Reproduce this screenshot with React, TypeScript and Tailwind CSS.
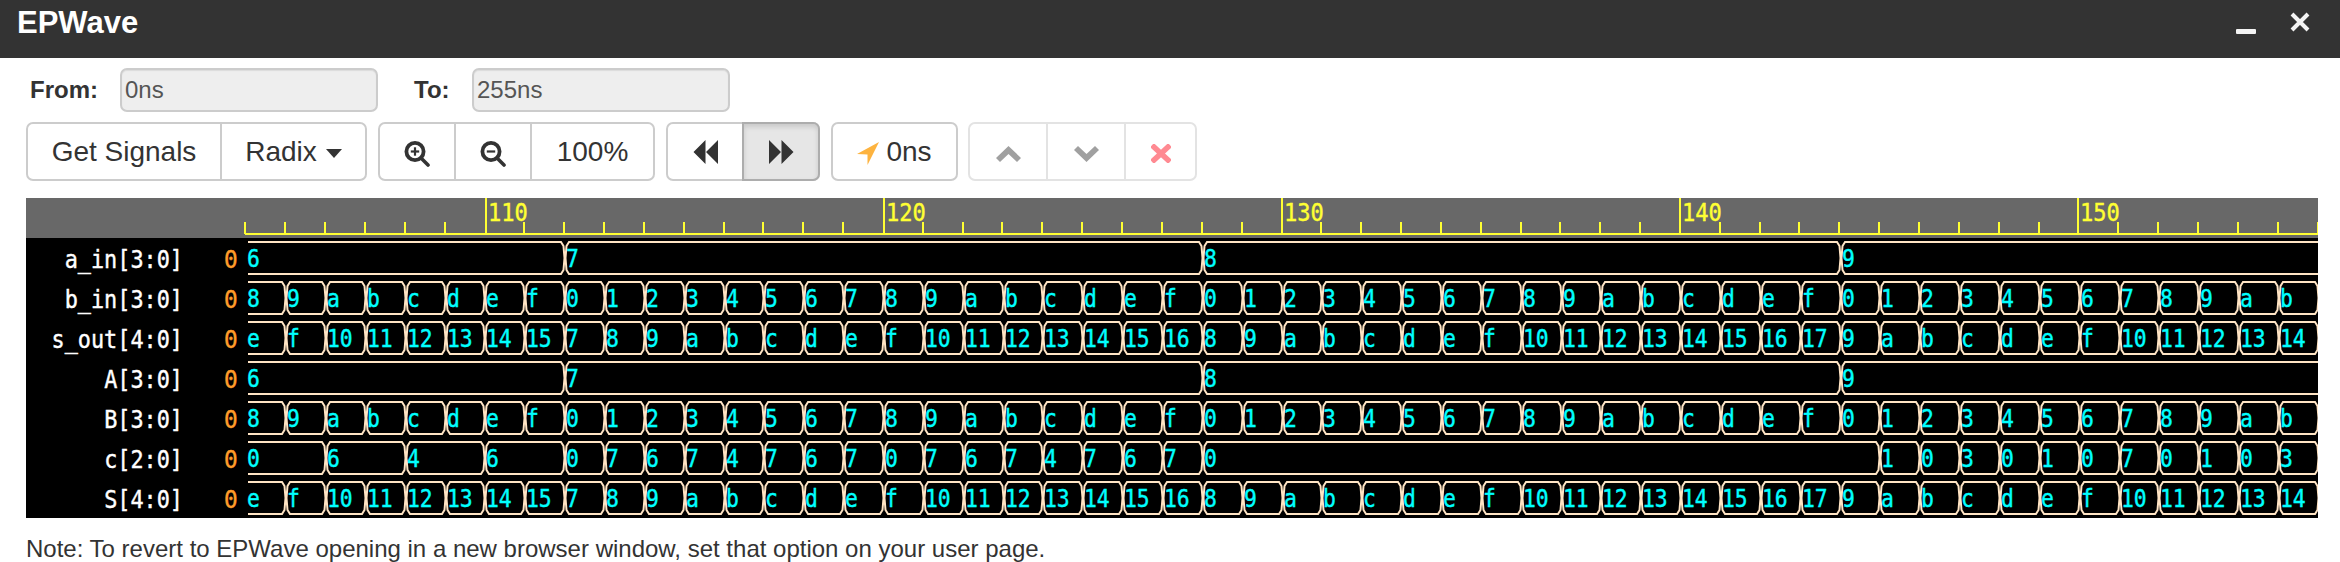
import type { ReactNode } from 'react';

const TICK_COUNT = 53;
const X0 = 246.2;
const STEP = 39.86;
const CLIP_RIGHT = 2318;

const hex = (n: number) => n.toString(16);
const tAt = (i: number) => Math.round(X0 + STEP * i);

type Seg = { start: number; end: number; value: string };

function fromList(items: [number, number, string][]): Seg[] {
  return items.map(([start, end, value]) => ({ start, end, value }));
}

function each(fn: (i: number) => string): Seg[] {
  return Array.from({ length: 52 }, (_, i) => ({ start: i, end: i + 1, value: fn(i) }));
}

const aVal = (i: number) => (i < 8 ? 6 : i < 24 ? 7 : i < 40 ? 8 : 9);
const bVal = (i: number) => (i + 8) % 16;

const aSegs = fromList([
  [0, 8, '6'],
  [8, 24, '7'],
  [24, 40, '8'],
  [40, 53, '9'],
]);
const bSegs = each((i) => hex(bVal(i)));
const sSegs = each((i) => hex(aVal(i) + bVal(i)));

const cMid = ['0', '7', '6', '7', '4', '7', '6', '7', '0', '7', '6', '7', '4', '7', '6', '7'];
const cEnd = ['1', '0', '3', '0', '1', '0', '7', '0', '1', '0', '3'];
const cSegs: Seg[] = [
  ...fromList([
    [0, 2, '0'],
    [2, 4, '6'],
    [4, 6, '4'],
    [6, 8, '6'],
  ]),
  ...cMid.map((value, i) => ({ start: 8 + i, end: 9 + i, value })),
  { start: 24, end: 41, value: '0' },
  ...cEnd.map((value, i) => ({ start: 41 + i, end: 42 + i, value })),
];

const signals: { name: string; segs: Seg[] }[] = [
  { name: 'a_in[3:0]', segs: aSegs },
  { name: 'b_in[3:0]', segs: bSegs },
  { name: 's_out[4:0]', segs: sSegs },
  { name: 'A[3:0]', segs: aSegs },
  { name: 'B[3:0]', segs: bSegs },
  { name: 'c[2:0]', segs: cSegs },
  { name: 'S[4:0]', segs: sSegs },
];

function segPath(seg: Seg, top: number) {
  const bot = top + 32;
  const mid = top + 16;
  const a = tAt(seg.start);
  const b = tAt(seg.end);
  const right = `L${b - 4} ${bot} L${b - 1.5} ${bot - 4} L${b - 0.5} ${mid} L${b - 1.5} ${top + 4} L${b - 4} ${top}`;
  if (seg.start === 0) {
    return `M${a + 2} ${bot} ${right} L${a + 2} ${top}`;
  }
  return `M${a + 4} ${top} L${a + 1.5} ${top + 4} L${a + 0.5} ${mid} L${a + 1.5} ${bot - 4} L${a + 4} ${bot} ${right} Z`;
}

function Mono({
  x,
  y,
  size = 24,
  sx = 0.89,
  fill,
  end,
  children,
}: {
  x: number;
  y: number;
  size?: number;
  sx?: number;
  fill: string;
  end?: boolean;
  children: ReactNode;
}) {
  return (
    <text
      transform={`translate(${x} ${y}) scale(${sx} 1)`}
      textAnchor={end ? 'end' : 'start'}
      fontFamily="'DejaVu Sans Mono', monospace"
      fontSize={size}
      fill={fill}
      stroke={fill}
      strokeWidth={0.4}
    >
      {children}
    </text>
  );
}

function Waves() {
  return (
    <svg width={2292} height={320} viewBox="26 198 2292 320" className="block">
      <rect x={26} y={198} width={2292} height={40} fill="#686868" />
      <rect x={26} y={238} width={2292} height={280} fill="#000" />
      <rect x={245} y={233} width={2073} height={2} fill="#ffff33" />
      {Array.from({ length: TICK_COUNT }, (_, i) => {
        if (i % 10 === 6) {
          const x = 246.9 + 39.8 * i;
          return (
            <g key={i}>
              <rect x={Math.round(x) - 1} y={198} width={2} height={36} fill="#ffff33" />
              <Mono x={Math.round(x) + 2} y={221} sx={0.92} fill="#ffff33">
                {104 + i}
              </Mono>
            </g>
          );
        }
        const x = Math.round(245.3 + 39.85 * i);
        return <rect key={i} x={x - 1} y={222} width={2} height={12} fill="#ffff33" />;
      })}
      {signals.map((sig, r) => {
        const rowTop = 238 + r * 40;
        return (
          <g key={r}>
            <Mono x={183} y={rowTop + 30} sx={0.91} fill="#fff" end>
              {sig.name}
            </Mono>
            <Mono x={224} y={rowTop + 30} sx={0.95} fill="#ff9c2a">
              0
            </Mono>
            {sig.segs.map((seg) => (
              <g key={seg.start}>
                <path d={segPath(seg, rowTop + 4)} fill="none" stroke="#ffe4c4" strokeWidth={2} />
                <Mono x={tAt(seg.start) + 1} y={rowTop + 29} fill="#00ffff">
                  {seg.value}
                </Mono>
              </g>
            ))}
          </g>
        );
      })}
      <rect x={CLIP_RIGHT} y={198} width={4} height={320} fill="#fff" />
    </svg>
  );
}

function ZoomIcon({ plus }: { plus?: boolean }) {
  return (
    <svg width={26} height={26} viewBox="0 0 26 26" className="mt-[4px]">
      <circle cx={11} cy={10.5} r={8.6} fill="none" stroke="#333" strokeWidth={3.8} />
      <path d="M17 17 L24 24" stroke="#333" strokeWidth={3.6} strokeLinecap="round" />
      <path d="M6.8 10.5 H15.2" stroke="#333" strokeWidth={2.2} />
      {plus && <path d="M11 6.3 V14.7" stroke="#333" strokeWidth={2.2} />}
    </svg>
  );
}

function SkipIcon({ flip }: { flip?: boolean }) {
  return (
    <svg width={25} height={24} viewBox="0 0 25 24" className={flip ? 'mt-[1px] -scale-x-100' : 'mt-[1px]'}>
      <path d="M12.5 0 V24 L0.5 12 Z M25 0 V24 L13 12 Z" fill="#333" />
    </svg>
  );
}

function Chevron({ down }: { down?: boolean }) {
  return (
    <svg width={25} height={16} viewBox="0 0 25 16" className={down ? 'mt-[5px] -scale-y-100' : 'mt-[5px]'}>
      <path d="M12.5 0 L25 12 L21 16 L12.5 8 L4 16 L0 12 Z" fill="#a0a0a0" />
    </svg>
  );
}

function Btn({ w, last, children, className = '' }: { w: string; last?: boolean; children: ReactNode; className?: string }) {
  return (
    <button
      className={`flex h-full items-center justify-center ${w} ${last ? '' : 'border-r-2 border-inherit'} ${className}`}
    >
      {children}
    </button>
  );
}

function Group({ w, children, faded }: { w: string; children: ReactNode; faded?: boolean }) {
  return (
    <div className={`flex h-[59px] rounded-[7px] border-2 ${faded ? 'border-[#e3e3e3]' : 'border-[#ccc]'} ${w}`}>
      {children}
    </div>
  );
}

export default function App() {
  return (
    <div className="flex h-[562px] flex-col overflow-hidden bg-white font-['Liberation_Sans',Arial,sans-serif] text-[#333]">
      <div className="flex h-[58px] shrink-0 items-start justify-between bg-[#333] pl-[17px] pr-[30px]">
        <h3 className="mt-[3px] text-[31px] font-bold leading-[40px] text-white">EPWave</h3>
        <div className="flex">
          <svg width={20} height={6} viewBox="0 0 20 6" className="mt-[29px]">
            <rect y={0} width={20} height={5} rx={1} fill="#f4f4f4" />
          </svg>
          <svg width={20} height={20} viewBox="0 0 20 20" className="ml-[34px] mt-[12px]">
            <path d="M2 2 L18 18 M18 2 L2 18" stroke="#f4f4f4" strokeWidth={4} />
          </svg>
        </div>
      </div>

      <div className="mt-[10px] flex h-[44px] shrink-0 items-center pl-[30px] text-[24px]">
        <label className="w-[90px] font-bold">From:</label>
        <input
          readOnly
          value="0ns"
          className="h-full w-[258px] rounded-[7px] border-2 border-[#ccc] bg-[#eee] px-[3px] text-[#555] shadow-[inset_0_1px_1px_rgba(0,0,0,0.08)]"
        />
        <label className="ml-[36px] w-[58px] font-bold">To:</label>
        <input
          readOnly
          value="255ns"
          className="h-full w-[258px] rounded-[7px] border-2 border-[#ccc] bg-[#eee] px-[3px] text-[#555] shadow-[inset_0_1px_1px_rgba(0,0,0,0.08)]"
        />
      </div>

      <div className="ml-[26px] mt-[10px] flex shrink-0 gap-[11px] text-[28px]">
        <Group w="w-[341px]">
          <Btn w="w-[194px]">Get Signals</Btn>
          <Btn w="w-[143px]" last>
            Radix
            <span className="ml-[9px] mt-[3px] h-0 w-0 border-x-[8px] border-t-[9px] border-x-transparent border-t-[#333]" />
          </Btn>
        </Group>
        <Group w="w-[277px]">
          <Btn w="w-[76px]">
            <ZoomIcon plus />
          </Btn>
          <Btn w="w-[76px]">
            <ZoomIcon />
          </Btn>
          <Btn w="w-[121px]" last>
            100%
          </Btn>
        </Group>
        <Group w="w-[154px]">
          <Btn w="w-[74px]" last>
            <SkipIcon />
          </Btn>
          <button className="-my-[2px] -mr-[2px] flex w-[78px] items-center justify-center rounded-r-[7px] border-2 border-[#adadad] bg-[#e6e6e6] shadow-[inset_0_3px_5px_rgba(0,0,0,0.125)]">
            <SkipIcon flip />
          </button>
        </Group>
        <Group w="w-[127px]">
          <Btn w="w-full" last>
            <svg width={22} height={23} viewBox="0 0 22 23" className="mr-[7px] mt-[3px]">
              <path d="M22 0 L0 12 L10.500 12.500 L10.500 23 Z" fill="#fdb33f" />
            </svg>
            0ns
          </Btn>
        </Group>
        <div className="-ml-[1px]">
          <Group w="w-[229px]" faded>
            <Btn w="w-[78px]" className="border-[#e3e3e3]">
              <Chevron />
            </Btn>
            <Btn w="w-[78px]" className="border-[#e3e3e3]">
              <Chevron down />
            </Btn>
            <Btn w="w-[69px]" last>
              <svg width={20} height={19} viewBox="0 0 20 19" className="mt-[3px]">
                <path d="M3 3 L17 16 M17 3 L3 16" stroke="#ff8a92" strokeWidth={5.500} strokeLinecap="square" />
              </svg>
            </Btn>
          </Group>
        </div>
      </div>

      <div className="ml-[26px] mt-[17px] w-[2292px] shrink-0">
        <Waves />
      </div>

      <p className="ml-[26px] mt-[15px] shrink-0 text-[24px] leading-[32px]">
        Note: To revert to EPWave opening in a new browser window, set that option on your user page.
      </p>
    </div>
  );
}
